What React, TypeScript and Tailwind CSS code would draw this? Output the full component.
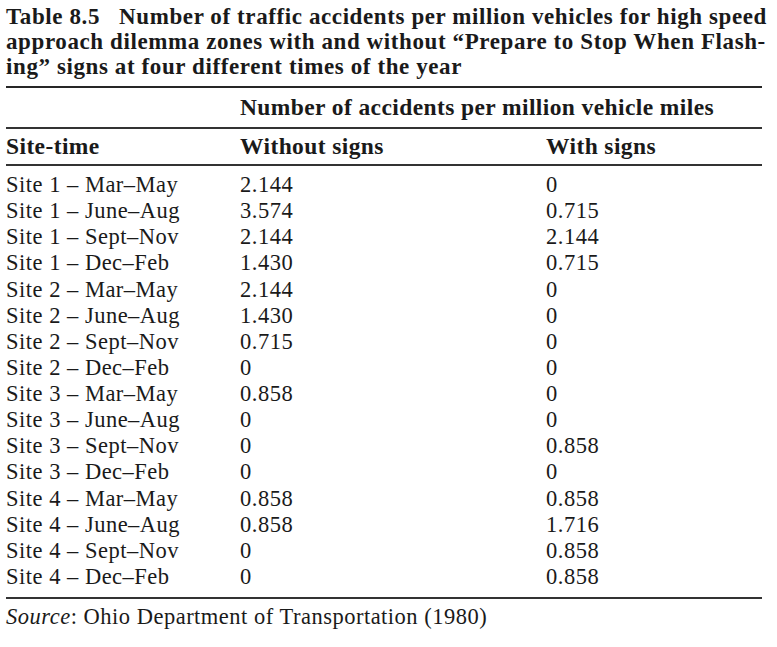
import React from 'react';

const rows: [string, string, string][] = [
  ['Site 1 – Mar–May', '2.144', '0'],
  ['Site 1 – June–Aug', '3.574', '0.715'],
  ['Site 1 – Sept–Nov', '2.144', '2.144'],
  ['Site 1 – Dec–Feb', '1.430', '0.715'],
  ['Site 2 – Mar–May', '2.144', '0'],
  ['Site 2 – June–Aug', '1.430', '0'],
  ['Site 2 – Sept–Nov', '0.715', '0'],
  ['Site 2 – Dec–Feb', '0', '0'],
  ['Site 3 – Mar–May', '0.858', '0'],
  ['Site 3 – June–Aug', '0', '0'],
  ['Site 3 – Sept–Nov', '0', '0.858'],
  ['Site 3 – Dec–Feb', '0', '0'],
  ['Site 4 – Mar–May', '0.858', '0.858'],
  ['Site 4 – June–Aug', '0.858', '1.716'],
  ['Site 4 – Sept–Nov', '0', '0.858'],
  ['Site 4 – Dec–Feb', '0', '0.858'],
];

export default function App() {
  return (
    <div className="w-[777px] h-[647px] bg-white text-[#1a1a1a] font-['Liberation_Serif',serif] pl-[6px] pt-[4px]">
      {/* Caption */}
      <h1 className="font-bold text-[23px] leading-[25px] tracking-[0.6px] whitespace-nowrap">
        Table 8.5&nbsp;&nbsp;&nbsp;Number of traffic accidents per million vehicles for high speed
        <br />
        approach dilemma zones with and without “Prepare to Stop When Flash-
        <br />
        ing” signs at four different times of the year
      </h1>

      <div className="w-[756px]">
        <div className="mt-[7px] border-t-2 border-[#262626]" />

        {/* Spanner header */}
        <div className="grid grid-cols-[234px_306px_1fr] text-[23.5px] tracking-[0.4px] font-bold h-[39px] items-center">
          <div />
          <div className="col-span-2 whitespace-nowrap">Number of accidents per million vehicle miles</div>
        </div>
        <div className="border-t-2 border-[#333]" />
        <div className="grid grid-cols-[234px_306px_1fr] text-[23.5px] tracking-[0.4px] font-bold h-[35px] items-center">
          <div>Site-time</div>
          <div>Without signs</div>
          <div>With signs</div>
        </div>
        <div className="border-t-2 border-[#333]" />

        {/* Body */}
        <div className="pt-[6px] pb-[7px] text-[22.5px] tracking-[0.5px] leading-[26.13px]">
          {rows.map(([site, without, withSigns]) => (
            <div key={site} className="grid grid-cols-[234px_306px_1fr]">
              <div className="whitespace-nowrap">{site}</div>
              <div>{without}</div>
              <div>{withSigns}</div>
            </div>
          ))}
        </div>
        <div className="border-t-2 border-[#333]" />

        <p className="mt-[5px] text-[22.5px] tracking-[0.5px] leading-[26px]">
          <i>Source</i>: Ohio Department of Transportation (1980)
        </p>
      </div>
    </div>
  );
}
